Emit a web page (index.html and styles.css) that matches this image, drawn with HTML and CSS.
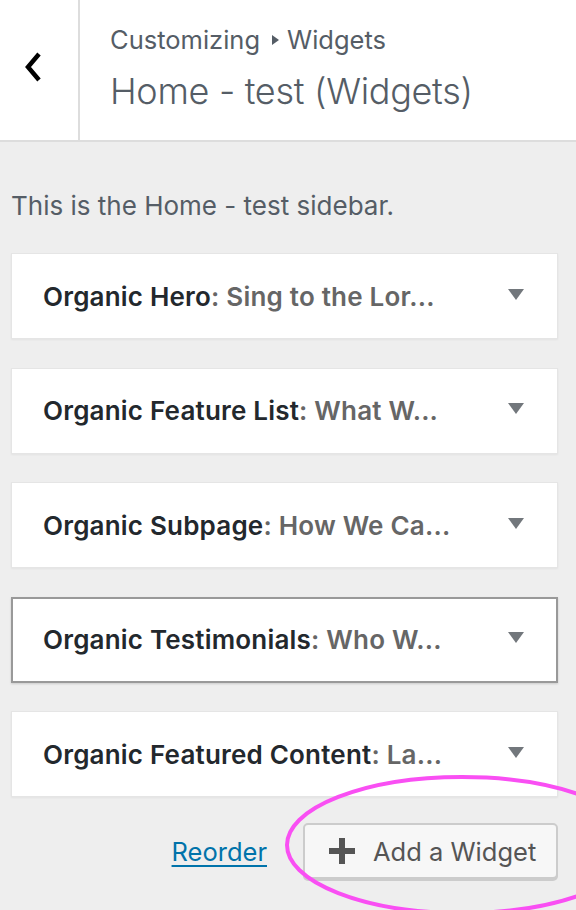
FILE: index.html
```html
<!DOCTYPE html>
<html lang="en">
<head>
<meta charset="utf-8">
<title>Customizing Widgets</title>
<link rel="stylesheet" href="styles.css">
</head>
<body>
<div class="panel">
  <header class="header">
    <div class="back">
      <svg class="chev" width="20" height="32" viewBox="0 0 20 32"><path d="M15 3 L4 16 L15 29" fill="none" stroke="#000" stroke-width="4.5"/></svg>
    </div>
    <div class="titles">
      <div class="crumb">Customizing <span class="crumb-arrow"></span> Widgets</div>
      <div class="title">Home - test (Widgets)</div>
    </div>
  </header>
  <main class="content">
    <p class="desc">This is the Home - test sidebar.</p>
    <ul class="widgets">
      <li class="widget"><span class="wt"><b>Organic Hero</b>: Sing to the Lor...</span><span class="tri"></span></li>
      <li class="widget"><span class="wt"><b>Organic Feature List</b>: What W...</span><span class="tri"></span></li>
      <li class="widget"><span class="wt"><b>Organic Subpage</b>: How We Ca...</span><span class="tri"></span></li>
      <li class="widget focused"><span class="wt"><b>Organic Testimonials</b>: Who W...</span><span class="tri"></span></li>
      <li class="widget"><span class="wt"><b>Organic Featured Content</b>: La...</span><span class="tri"></span></li>
    </ul>
    <div class="actions">
      <a class="reorder" href="#">Reorder</a>
      <button class="add"><span class="plus"></span>Add a Widget</button>
    </div>
  </main>
</div>
<svg class="ring" width="576" height="910" viewBox="0 0 576 910"><ellipse cx="462" cy="845" rx="175" ry="68" fill="none" stroke="#f94ff3" stroke-width="4"/></svg>
</body>
</html>
```
FILE: styles.css
```css
html, body { margin: 0; padding: 0; }
body {
  background: #eeeeee;
  font-family: Inter, "Noto Sans", "DejaVu Sans", sans-serif;
  width: 576px;
  height: 910px;
  overflow: hidden;
  position: relative;
}
.header {
  display: flex;
  height: 140px;
  background: #fff;
  border-bottom: 2px solid #dddddd;
}
.back {
  width: 80px;
  border-right: 2px solid #dddddd;
  display: flex;
  align-items: center;
  justify-content: center;
  padding-right: 10px;
  box-sizing: border-box;
}
.chev { display: block; margin-top: -6px; }
.titles {
  display: flex;
  flex-direction: column;
  justify-content: center;
  padding-left: 30px;
  color: #555d66;
  padding-bottom: 2px;
}
.crumb {
  font-size: 25.5px;
  line-height: 30px;
  display: flex;
  align-items: center;
  gap: 10px;
}
.crumb-arrow {
  width: 0; height: 0;
  border-left: 7px solid #555d66;
  border-top: 5px solid transparent;
  border-bottom: 5px solid transparent;
  margin-left: 2px;
  margin-right: -2px;
}
.title {
  font-size: 36px;
  font-weight: 300;
  line-height: 46px;
  margin-top: 13px;
  letter-spacing: -0.3px;
}
.content { padding: 0 18px 0 11px; }
.desc {
  margin: 46px 0 0;
  font-size: 26px;
  line-height: 36px;
  color: #555d66;
}
.widgets {
  list-style: none;
  margin: 29px 0 0;
  padding: 0;
  display: flex;
  flex-direction: column;
  gap: 28.5px;
}
.widget {
  height: 86px;
  box-sizing: border-box;
  background: #fff;
  border: 1px solid #e5e5e5;
  box-shadow: 0 1px 2px rgba(0,0,0,0.05);
  display: flex;
  align-items: center;
  justify-content: space-between;
  padding: 0 33px 0 31px;
}
.widget.focused {
  border: 2px solid #999999;
  padding-left: 30px;
  padding-right: 32px;
  box-shadow: 0 1px 2px rgba(0,0,0,0.15);
}
.wt {
  font-size: 26px;
  font-weight: 600;
  color: #666666;
  white-space: nowrap;
  letter-spacing: 0.2px;
}
.wt b { color: #23282d; font-weight: 600; }
.tri {
  width: 0; height: 0;
  border-top: 11px solid #72777c;
  border-left: 8px solid transparent;
  border-right: 8px solid transparent;
  margin-top: -4px;
}
.actions {
  display: flex;
  justify-content: flex-end;
  align-items: center;
  gap: 36px;
  margin-top: 26px;
}
.reorder {
  font-size: 25.5px;
  color: #0073aa;
  text-decoration: underline;
  text-underline-offset: 4px;
  text-decoration-thickness: 2px;
}
.add {
  width: 255px;
  height: 56px;
  box-sizing: border-box;
  background: #f7f7f7;
  border: 2px solid #cccccc;
  border-radius: 5px;
  box-shadow: 0 2px 0 #cccccc;
  font-family: inherit;
  font-size: 25.5px;
  color: #555555;
  display: flex;
  align-items: center;
  padding: 0 0 0 24px;
  gap: 18px;
}
.plus {
  width: 26px;
  height: 26px;
  position: relative;
  display: inline-block;
}
.plus::before, .plus::after {
  content: "";
  position: absolute;
  background: #555555;
}
.plus::before { left: 0; right: 0; top: 10px; height: 6px; }
.plus::after { top: 0; bottom: 0; left: 10px; width: 6px; }
.ring {
  position: absolute;
  left: 0;
  top: 0;
  pointer-events: none;
}
```
